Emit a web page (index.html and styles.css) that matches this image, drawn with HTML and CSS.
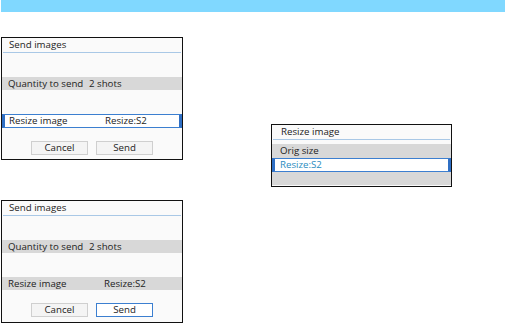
FILE: index.html
```html
<!DOCTYPE html>
<html lang="en">
<head>
    <meta charset="UTF-8">
    <title>Send images</title>
    <link rel="stylesheet" href="styles.css">
</head>
<body>
    <div class="top-bar"></div>

    <div class="screens">
        <div class="left-col">
            <div class="panel">
                <div class="panel-title">Send images</div>
                <div class="row gray">
                    <span class="label short">Quantity to send</span>
                    <span class="value">2 shots</span>
                </div>
                <div class="row selected">
                    <span class="label">Resize image</span>
                    <span class="value">Resize:S2</span>
                </div>
                <div class="buttons">
                    <div class="btn">Cancel</div>
                    <div class="btn">Send</div>
                </div>
            </div>

            <div class="panel">
                <div class="panel-title">Send images</div>
                <div class="row gray">
                    <span class="label short">Quantity to send</span>
                    <span class="value">2 shots</span>
                </div>
                <div class="row gray">
                    <span class="label">Resize image</span>
                    <span class="value">Resize:S2</span>
                </div>
                <div class="buttons">
                    <div class="btn">Cancel</div>
                    <div class="btn active">Send</div>
                </div>
            </div>
        </div>

        <div class="right-col">
            <div class="panel small">
                <div class="panel-title">Resize image</div>
                <div class="menu">
                    <div class="menu-item">Orig size</div>
                    <div class="menu-item picked">Resize:S2</div>
                </div>
            </div>
        </div>
    </div>
</body>
</html>
```

FILE: styles.css
```css
body {
    margin: 0;
    background: #ffffff;
    font-family: 'Open Sans', 'Noto Sans', sans-serif;
    font-size: 9.7px;
    color: #222;
}

.top-bar {
    height: 12px;
    margin: 0 1px;
    background: #80d8ff;
}

.screens {
    display: grid;
    grid-template-columns: 182px 181px;
    column-gap: 88px;
    padding: 25px 0 0 1px;
}

.left-col {
    display: flex;
    flex-direction: column;
    gap: 40px;
}

.right-col {
    padding-top: 87px;
}

.panel {
    box-sizing: border-box;
    height: 123px;
    border: 1.5px solid #111;
    background: #fafafa;
    display: flex;
    flex-direction: column;
}

.panel-title {
    height: 14px;
    line-height: 14px;
    padding-left: 6px;
    margin: 0 1px;
    border-bottom: 1px solid #a9c8e6;
}

.row {
    box-sizing: border-box;
    height: 13px;
    line-height: 13px;
    display: flex;
    padding-left: 6px;
    margin-top: 24px;
}

.gray {
    background: #d8d8d8;
}

.selected {
    background: #ffffff;
    border: 1px solid #3c7fd0;
    border-left: 3px solid #2f6fc4;
    border-right: 3px solid #2f6fc4;
    padding-left: 4px;
    height: 14px;
    line-height: 12px;
}

.label {
    width: 96px;
}

.label.short {
    width: 81px;
}

.buttons {
    display: flex;
    justify-content: center;
    gap: 8px;
    margin-top: 13px;
}

.btn {
    box-sizing: border-box;
    width: 57px;
    height: 14px;
    line-height: 12px;
    text-align: center;
    background: #f4f4f4;
    border: 1px solid #cfcfcf;
}

.btn.active {
    background: #ffffff;
    border: 1px solid #3c7fd0;
}

.panel.small {
    height: 63px;
}

.small .panel-title {
    padding-left: 8px;
}

.menu {
    margin-top: 4px;
    background: #d8d8d8;
    flex: 1;
    margin-bottom: 1px;
}

.menu-item {
    box-sizing: border-box;
    height: 14px;
    line-height: 14px;
    padding-left: 8px;
}

.menu-item.picked {
    background: #ffffff;
    color: #2a8cc0;
    border: 1px solid #3c7fd0;
    border-left: 3px solid #2f6fc4;
    border-right: 3px solid #2f6fc4;
    padding-left: 5px;
    line-height: 12px;
}
```
